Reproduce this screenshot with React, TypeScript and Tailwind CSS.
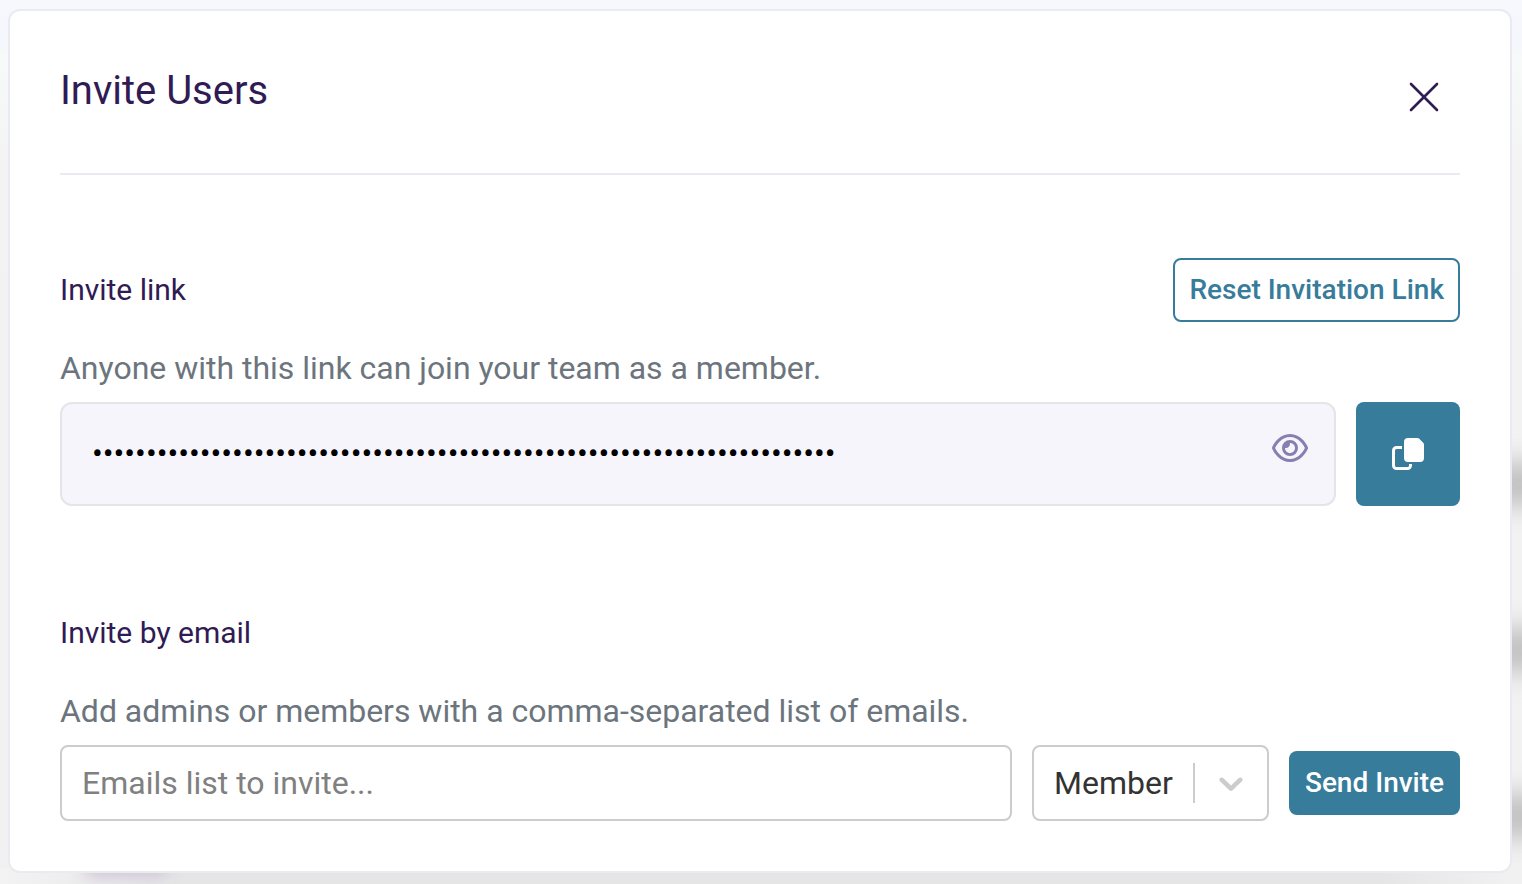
import { useState } from "react";
import { FaRegEye } from "react-icons/fa6";

const INVITE_LINK = "https://app.example.com/join/team/3f9a1c7e5b2d4806a1c7e5b2d4806f9a1c7";

function CloseIcon() {
  return (
    <svg width="30" height="30" viewBox="0 0 30 30" fill="none">
      <path
        d="M2 2L28 28M28 2L2 28"
        stroke="currentColor"
        strokeWidth="2.6"
        strokeLinecap="round"
      />
    </svg>
  );
}

function CopyIcon() {
  return (
    <svg width="32" height="32" viewBox="0 0 32 32" fill="none">
      <path
        d="M10 9.5H4.5A3 3 0 0 0 1.5 12.5V27.5A3 3 0 0 0 4.5 30.5H15.5A3 3 0 0 0 18.5 27.5V26"
        stroke="white"
        strokeWidth="3"
      />
      <path
        d="M16 0H25.5Q26.5 0 27.3 0.8L31.2 4.7Q32 5.5 32 6.5V20A4 4 0 0 1 28 24H16A4 4 0 0 1 12 20V4A4 4 0 0 1 16 0Z"
        fill="white"
      />
    </svg>
  );
}

function ChevronIcon() {
  return (
    <svg width="40" height="40" viewBox="0 0 20 20" fill="currentColor">
      <path d="M4.516 7.548c0.436-0.446 1.043-0.481 1.576 0l3.908 3.747 3.908-3.747c0.533-0.481 1.141-0.446 1.574 0 0.436 0.445 0.408 1.197 0 1.615-0.406 0.418-4.695 4.502-4.695 4.502-0.217 0.223-0.502 0.335-0.787 0.335s-0.57-0.112-0.789-0.335c0 0-4.287-4.084-4.695-4.502s-0.436-1.17 0-1.615z" />
    </svg>
  );
}

export default function App() {
  const [emails, setEmails] = useState("");

  return (
    <div className="relative h-[884px] w-[1522px] overflow-hidden bg-[linear-gradient(#f7f8fd_0px,#f5f7fc_44px,#f8f9f9_60px,#f3f3f3_170px,#f1f1f1_100%)] pt-[9px] pl-2 font-['Roboto',sans-serif]">
      {/* Blurred page behind the modal */}
      <div className="absolute top-[462px] left-[1490px] h-11 w-[60px] bg-[#c2c2c2] blur-[12px]" />
      <div className="absolute top-[628px] left-[1490px] h-11 w-[60px] bg-[#c2c2c2] blur-[12px]" />
      <div className="absolute top-[794px] left-[1490px] h-11 w-[60px] bg-[#c2c2c2] blur-[12px]" />
      <div className="absolute top-[868px] left-0 h-4 w-full bg-[linear-gradient(90deg,#f3f3f3_0px,#e5e5e5_180px,#e5e5e5_1380px,#f1f1f1_1510px)]" />
      <div className="absolute top-[860px] left-[84px] h-4 w-[84px] rounded-full bg-[#cdbfd6] blur-[8px]" />

      {/* Modal */}
      <div className="relative flex h-[864px] w-[1504px] flex-col rounded-xl border-2 border-[#e8ebef] bg-white px-[50px]">
        <header className="flex h-[164px] shrink-0 justify-between border-b-2 border-[#e8ebef] pt-[56px] pr-[21px]">
          <h1 className="text-[40px] leading-[47px] tracking-[-0.02px] text-[#301b54]">
            Invite Users
          </h1>
          <button className="mt-[15px] h-[30px] text-[#301b54]" aria-label="Close">
            <CloseIcon />
          </button>
        </header>

        {/* Invite link */}
        <section className="mt-[83px]">
          <div className="flex h-16 items-center justify-between">
            <h2 className="text-[30px] leading-9 text-[#301b54]">Invite link</h2>
            <button className="h-16 rounded-lg border-2 border-[#377c9b] px-[14px] text-[28px] leading-8 font-medium text-[#377c9b]">
              Reset Invitation Link
            </button>
          </div>
          <p className="mt-[26px] text-[32px] leading-10 tracking-[-0.015px] text-[#6c757d]">
            Anyone with this link can join your team as a member.
          </p>
          <div className="mt-[14px] flex gap-5">
            <div className="flex h-[104px] flex-1 items-center rounded-xl border-2 border-[#e5e5e9] bg-[#f6f5fb] pr-[26px] pl-[30px]">
              <input
                type="password"
                readOnly
                value={INVITE_LINK}
                className="-mt-0.5 h-12 min-w-0 flex-1 bg-transparent text-[32px] tracking-[-0.02px] text-black outline-none"
              />
              <FaRegEye className="-mt-3 h-8 w-9 text-[#877fb0]" />
            </div>
            <button
              className="flex size-[104px] items-center justify-center rounded-lg bg-[#377c9b]"
              aria-label="Copy link"
            >
              <CopyIcon />
            </button>
          </div>
        </section>

        {/* Invite by email */}
        <section className="mt-[109px]">
          <h2 className="text-[30px] leading-9 text-[#301b54]">Invite by email</h2>
          <p className="mt-[40px] text-[32px] leading-10 tracking-[-0.015px] text-[#6c757d]">
            Add admins or members with a comma-separated list of emails.
          </p>
          <div className="mt-[14px] flex items-center">
            <input
              value={emails}
              onChange={(e) => setEmails(e.target.value)}
              placeholder="Emails list to invite..."
              className="h-[76px] w-[952px] rounded-lg border-2 border-[#cccccc] px-5 text-[32px] text-[#333333] outline-none placeholder:text-[#808080]"
            />
            <div className="ml-5 flex h-[76px] w-[237px] items-center rounded-lg border-2 border-[#cccccc] pl-5">
              <span className="w-[139px] text-[32px] leading-10 text-[#333333]">
                Member
              </span>
              <span className="h-10 w-0.5 bg-[#cccccc]" />
              <span className="ml-4 text-[#cccccc]">
                <ChevronIcon />
              </span>
            </div>
            <button className="ml-5 h-16 w-[171px] rounded-lg bg-[#377c9b] text-[28px] leading-8 font-medium text-white">
              Send Invite
            </button>
          </div>
        </section>
      </div>
    </div>
  );
}
